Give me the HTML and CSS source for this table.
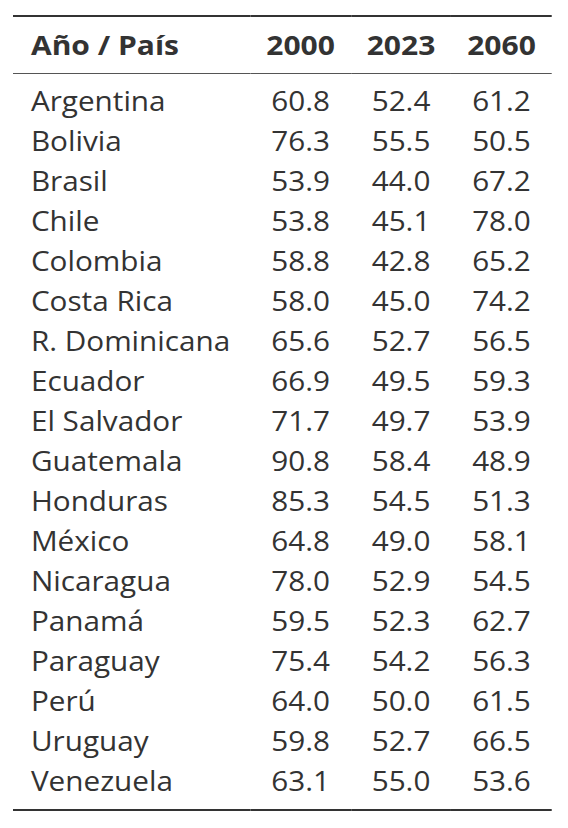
FILE: index.html
```html
<html>
  <head>
    <title>Año / País</title>
    <link rel="stylesheet" href="styles.css">
  </head>
  <body>
    <table class="data">
      <thead>
        <tr>
          <th class="name">Año / País</th>
          <th>2000</th>
          <th>2023</th>
          <th>2060</th>
        </tr>
      </thead>
      <tbody>
        <tr class="first"><td class="name">Argentina</td><td>60.8</td><td>52.4</td><td>61.2</td></tr>
        <tr><td class="name">Bolivia</td><td>76.3</td><td>55.5</td><td>50.5</td></tr>
        <tr><td class="name">Brasil</td><td>53.9</td><td>44.0</td><td>67.2</td></tr>
        <tr><td class="name">Chile</td><td>53.8</td><td>45.1</td><td>78.0</td></tr>
        <tr><td class="name">Colombia</td><td>58.8</td><td>42.8</td><td>65.2</td></tr>
        <tr><td class="name">Costa Rica</td><td>58.0</td><td>45.0</td><td>74.2</td></tr>
        <tr><td class="name">R. Dominicana</td><td>65.6</td><td>52.7</td><td>56.5</td></tr>
        <tr><td class="name">Ecuador</td><td>66.9</td><td>49.5</td><td>59.3</td></tr>
        <tr><td class="name">El Salvador</td><td>71.7</td><td>49.7</td><td>53.9</td></tr>
        <tr><td class="name">Guatemala</td><td>90.8</td><td>58.4</td><td>48.9</td></tr>
        <tr><td class="name">Honduras</td><td>85.3</td><td>54.5</td><td>51.3</td></tr>
        <tr><td class="name">México</td><td>64.8</td><td>49.0</td><td>58.1</td></tr>
        <tr><td class="name">Nicaragua</td><td>78.0</td><td>52.9</td><td>54.5</td></tr>
        <tr><td class="name">Panamá</td><td>59.5</td><td>52.3</td><td>62.7</td></tr>
        <tr><td class="name">Paraguay</td><td>75.4</td><td>54.2</td><td>56.3</td></tr>
        <tr><td class="name">Perú</td><td>64.0</td><td>50.0</td><td>61.5</td></tr>
        <tr><td class="name">Uruguay</td><td>59.8</td><td>52.7</td><td>66.5</td></tr>
        <tr class="last"><td class="name">Venezuela</td><td>63.1</td><td>55.0</td><td>53.6</td></tr>
      </tbody>
    </table>
  </body>
</html>
```

FILE: styles.css
```css
body {
  margin: 15px 0 0 13px;
  font-family: "Open Sans", sans-serif;
  color: #333333;
  background: #ffffff;
}
.data {
  width: 481px;
  table-layout: fixed;
  border-collapse: collapse;
  border-top: 2px solid #333333;
  border-bottom: 2px solid #333333;
  transform: scaleX(1.12);
  transform-origin: left top;
}
.data th,
.data td {
  width: 89.7px;
  padding: 0;
  text-align: center;
  white-space: nowrap;
}
.data th.name,
.data td.name {
  width: auto;
  text-align: left;
  padding-left: 16px;
}
.data th {
  font-weight: bold;
  font-size: 26.8px;
  height: 57px;
  border-bottom: 1px solid #555555;
}
.data td {
  font-size: 26.5px;
  height: 40px;
  line-height: 40px;
}
.data tr.first td {
  padding-top: 7px;
}
.data tr.last td {
  padding-bottom: 8px;
}
```
